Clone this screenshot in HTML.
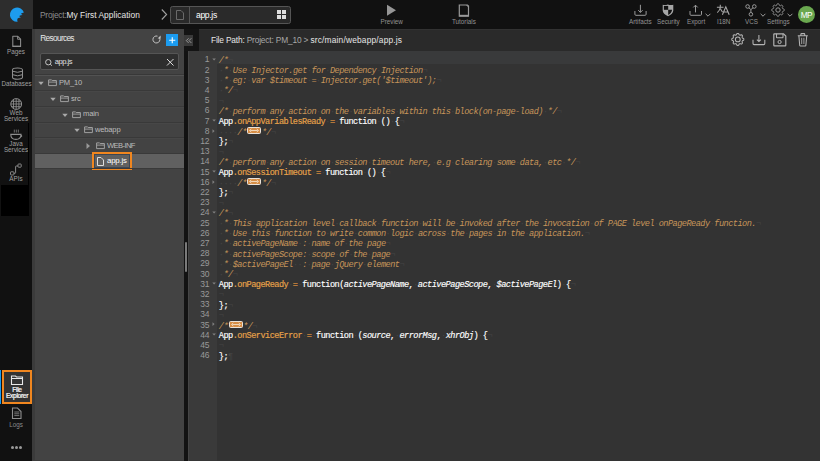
<!DOCTYPE html><html><head><meta charset="utf-8"><style>
*{margin:0;padding:0;box-sizing:border-box}
html,body{width:820px;height:461px;overflow:hidden;background:#111;font-family:"Liberation Sans",sans-serif}
.a{position:absolute}
.t{position:absolute;white-space:pre;line-height:1}
.lbl{position:absolute;font-size:6.3px;color:#939393;white-space:nowrap;line-height:1}
svg{position:absolute;overflow:visible}
.cl{position:absolute;left:0;white-space:pre;-webkit-text-stroke:0.15px currentColor;font-family:"Liberation Mono",monospace;font-size:8.6px;letter-spacing:-0.53px;height:10.2px;line-height:10.2px}
.ln{position:absolute;right:7px;font-family:"Liberation Sans",sans-serif;font-size:8.5px;color:#999;letter-spacing:-0.2px;line-height:10.2px;text-align:right}
.cm{color:#c7955a;font-style:italic;-webkit-text-stroke:0}
.id{color:#fff}
.pr{color:#e9a44a}
.op{color:#d08a3c}
.kw{color:#fff}
.pa{color:#fff;font-style:italic}
.ws{color:#444;font-style:normal;-webkit-text-stroke:0}
.fold{display:inline-block;width:14px;height:7px;border:1px solid #e9e2da;border-radius:1.5px;background:#d68d45;vertical-align:0.5px;margin:0 0.5px 0 0.5px;position:relative;-webkit-text-stroke:0}
.fold svg{left:0;top:0}
</style></head><body>
<div class="a" style="left:0;top:0;width:820px;height:29px;background:#111"></div>
<div class="a" style="left:0;top:0;width:33px;height:29px;background:#2d2d2d"></div>
<div class="a" style="left:0;top:29px;width:32px;height:432px;background:#111"></div>
<div class="a" style="left:32px;top:29px;width:152px;height:432px;background:#434343"></div>
<div class="a" style="left:32px;top:29px;width:3px;height:432px;background:#3b3b3b"></div>
<div class="a" style="left:184px;top:29px;width:4px;height:432px;background:#121212"></div>
<div class="a" style="left:184px;top:29px;width:15px;height:22px;background:#141414"></div>
<div class="a" style="left:199px;top:29px;width:621px;height:22px;background:#2a2a2a"></div>
<div class="a" style="left:199px;top:29px;width:621px;height:1px;background:#323232"></div>
<div class="a" style="left:188px;top:51px;width:29px;height:410px;background:#3a3a3a"></div>
<div class="a" style="left:188px;top:51px;width:1px;height:410px;background:#454545"></div>
<div class="a" style="left:217px;top:51px;width:603px;height:410px;background:#333"></div>
<svg style="left:0;top:0" width="33" height="29" viewBox="0 0 33 29"><path fill="#1d9cee" d="M23.9 12.6 A7.15 7.15 0 1 0 17.6 21.8 Q16.8 19.8 17.6 18.4 Q18.8 17.4 20.9 17.4 Q19.6 16.8 19.2 16.1 Q20.8 15 22.6 15 Q21.3 14.4 20.9 13.8 Q22.2 12.8 23.9 12.6 Z"/></svg>
<div class="t" style="left:40px;top:10.5px;font-size:8.4px;color:#8c8c8c"><span style="letter-spacing:-0.24px">Project:</span><span style="color:#e6e6e6;letter-spacing:0.04px">My First Application</span></div>
<svg style="left:160px;top:8px" width="10" height="13"><path d="M1.8 1.5 L6.6 6.5 L1.8 11.5" fill="none" stroke="#a0a0a0" stroke-width="1.1"/></svg>
<div class="a" style="left:170px;top:6px;width:121px;height:18px;background:#2a2a2a;border:1px solid #555;border-radius:2.5px"></div>
<div class="a" style="left:189px;top:7px;width:1px;height:16px;background:#555"></div>
<svg style="left:175px;top:9px" width="10" height="12"><path d="M1.5 1.5 H6 L8.5 4 V10.5 H1.5 Z" fill="none" stroke="#6a6a6a" stroke-width="1"/></svg>
<div class="t" style="left:196px;top:10.5px;font-size:8.6px;color:#fff;letter-spacing:-0.35px">app.js</div>
<div class="a" style="left:277px;top:10px;width:4px;height:4px;background:#ddd"></div>
<div class="a" style="left:282px;top:10px;width:4px;height:4px;background:#ddd"></div>
<div class="a" style="left:277px;top:15px;width:4px;height:4px;background:#ddd"></div>
<div class="a" style="left:282px;top:15px;width:4px;height:4px;background:#ddd"></div>
<svg style="left:386px;top:4px" width="12" height="14"><path d="M1 0.8 L10 6.2 L1 11.8 Z" fill="#969696"/></svg>
<div class="lbl" style="left:380.5px;top:18.9px">Preview</div>
<svg style="left:458px;top:4px" width="13" height="14"><path d="M1.3 1 H9.5 L10.5 2 V12.2 H1.3 Z" fill="none" stroke="#999" stroke-width="1.2"/><path d="M1.3 11.6 H10.5" stroke="#999" stroke-width="1.6"/><path d="M8.5 1 L10.5 3" stroke="#999" stroke-width="1"/></svg>
<div class="lbl" style="left:452px;top:18.9px">Tutorials</div>
<svg style="left:633px;top:4px" width="16" height="14"><path d="M7.4 0.8 V8.4 M5.2 6.2 L7.4 8.4 L9.6 6.2" fill="none" stroke="#9a9a9a" stroke-width="1"/><path d="M1.9 7 V10.3 Q1.9 11.3 2.9 11.3 H12.1 Q13.1 11.3 13.1 10.3 V7" fill="none" stroke="#9a9a9a" stroke-width="1"/></svg>
<div class="lbl" style="left:629px;top:18.9px">Artifacts</div>
<svg style="left:662px;top:4px" width="13" height="14"><path d="M0.7 0.8 Q3.2 1.5 5.8 0.6 Q8.6 1.5 11.3 0.8 V6.5 Q11 10.2 6 12.2 Q1 10.2 0.7 6.5 Z" fill="#a6a6a6"/><path d="M1.9 1.9 H6.2 V5.8 H1.9 Z" fill="#111"/><path d="M6.2 5.8 H10.1 Q9.7 9.2 6.2 10.9 Z" fill="#111"/></svg>
<div class="lbl" style="left:657px;top:18.9px">Security</div>
<svg style="left:688px;top:4px" width="16" height="14"><path d="M7.5 8.4 V1.2 M5.3 3.4 L7.5 1.2 L9.7 3.4" fill="none" stroke="#9a9a9a" stroke-width="1"/><path d="M2 7 V10.3 Q2 11.3 3 11.3 H12.5 Q13.5 11.3 13.5 10.3 V7" fill="none" stroke="#9a9a9a" stroke-width="1"/></svg>
<div class="lbl" style="left:687px;top:18.9px">Export</div>
<svg style="left:704.5px;top:13px" width="8" height="5"><path d="M0.6 0.8 L3 3.2 L5.4 0.8" fill="none" stroke="#9a9a9a" stroke-width="1"/></svg>
<svg style="left:716px;top:4px" width="15" height="13"><path d="M4.3 0.8 V3.2 M0.9 3.2 H7.5 M4.3 3.2 Q4 6.5 1.3 8.6 M4.5 4.8 Q5.6 7.2 6.6 8" fill="none" stroke="#a8a8a8" stroke-width="1.05"/><path d="M6.4 10.8 L9.8 2.9 L13.2 10.8 M7.6 8 H12" fill="none" stroke="#a8a8a8" stroke-width="1.1"/></svg>
<div class="lbl" style="left:717px;top:18.9px">I18N</div>
<svg style="left:744px;top:3px" width="14" height="14"><circle cx="3.6" cy="3.5" r="1.8" fill="none" stroke="#9a9a9a" stroke-width="1"/><circle cx="10.3" cy="3.5" r="1.8" fill="none" stroke="#9a9a9a" stroke-width="1"/><circle cx="6.9" cy="11.3" r="1.8" fill="none" stroke="#9a9a9a" stroke-width="1"/><path d="M4.9 4.8 L6.9 6.6 L9 4.8 M6.9 6.6 V9.5" fill="none" stroke="#9a9a9a" stroke-width="1"/></svg>
<div class="lbl" style="left:745px;top:18.9px">VCS</div>
<svg style="left:759.7px;top:13px" width="8" height="5"><path d="M0.6 0.8 L3 3.2 L5.4 0.8" fill="none" stroke="#9a9a9a" stroke-width="1"/></svg>
<svg style="left:771px;top:3px" width="15" height="15"><path d="M13.30 7.00 L13.29 7.25 L13.26 7.49 L13.17 7.73 L12.93 7.94 L12.44 8.08 L11.95 8.19 L11.71 8.33 L11.59 8.49 L11.51 8.66 L11.43 8.84 L11.36 9.01 L11.30 9.19 L11.27 9.39 L11.34 9.66 L11.61 10.08 L11.86 10.53 L11.88 10.85 L11.77 11.08 L11.62 11.27 L11.45 11.45 L11.27 11.62 L11.08 11.77 L10.85 11.88 L10.53 11.86 L10.08 11.61 L9.66 11.34 L9.39 11.27 L9.19 11.30 L9.01 11.36 L8.84 11.43 L8.66 11.51 L8.49 11.59 L8.33 11.71 L8.19 11.95 L8.08 12.44 L7.94 12.93 L7.73 13.17 L7.49 13.26 L7.25 13.29 L7.00 13.30 L6.75 13.29 L6.51 13.26 L6.27 13.17 L6.06 12.93 L5.92 12.44 L5.81 11.95 L5.67 11.71 L5.51 11.59 L5.34 11.51 L5.16 11.43 L4.99 11.36 L4.81 11.30 L4.61 11.27 L4.34 11.34 L3.92 11.61 L3.47 11.86 L3.15 11.88 L2.92 11.77 L2.73 11.62 L2.55 11.45 L2.38 11.27 L2.23 11.08 L2.12 10.85 L2.14 10.53 L2.39 10.08 L2.66 9.66 L2.73 9.39 L2.70 9.19 L2.64 9.01 L2.57 8.84 L2.49 8.66 L2.41 8.49 L2.29 8.33 L2.05 8.19 L1.56 8.08 L1.07 7.94 L0.83 7.73 L0.74 7.49 L0.71 7.25 L0.70 7.00 L0.71 6.75 L0.74 6.51 L0.83 6.27 L1.07 6.06 L1.56 5.92 L2.05 5.81 L2.29 5.67 L2.41 5.51 L2.49 5.34 L2.57 5.16 L2.64 4.99 L2.70 4.81 L2.73 4.61 L2.66 4.34 L2.39 3.92 L2.14 3.47 L2.12 3.15 L2.23 2.92 L2.38 2.73 L2.55 2.55 L2.73 2.38 L2.92 2.23 L3.15 2.12 L3.47 2.14 L3.92 2.39 L4.34 2.66 L4.61 2.73 L4.81 2.70 L4.99 2.64 L5.16 2.57 L5.34 2.49 L5.51 2.41 L5.67 2.29 L5.81 2.05 L5.92 1.56 L6.06 1.07 L6.27 0.83 L6.51 0.74 L6.75 0.71 L7.00 0.70 L7.25 0.71 L7.49 0.74 L7.73 0.83 L7.94 1.07 L8.08 1.56 L8.19 2.05 L8.33 2.29 L8.49 2.41 L8.66 2.49 L8.84 2.57 L9.01 2.64 L9.19 2.70 L9.39 2.73 L9.66 2.66 L10.08 2.39 L10.53 2.14 L10.85 2.12 L11.08 2.23 L11.27 2.38 L11.45 2.55 L11.62 2.73 L11.77 2.92 L11.88 3.15 L11.86 3.47 L11.61 3.92 L11.34 4.34 L11.27 4.61 L11.30 4.81 L11.36 4.99 L11.43 5.16 L11.51 5.34 L11.59 5.51 L11.71 5.67 L11.95 5.81 L12.44 5.92 L12.93 6.06 L13.17 6.27 L13.26 6.51 L13.29 6.75Z" fill="none" stroke="#9a9a9a" stroke-width="1" stroke-linejoin="round"/><circle cx="7" cy="7" r="2.2" fill="none" stroke="#9a9a9a" stroke-width="1"/></svg>
<div class="lbl" style="left:767px;top:18.9px">Settings</div>
<svg style="left:787.2px;top:13px" width="8" height="5"><path d="M0.6 0.8 L3 3.2 L5.4 0.8" fill="none" stroke="#9a9a9a" stroke-width="1"/></svg>
<div class="a" style="left:798px;top:6px;width:17px;height:17px;border-radius:50%;background:#6aa84f"></div>
<div class="t" style="left:797.8px;top:11.2px;width:17px;text-align:center;font-size:8.3px;color:#fff;letter-spacing:-0.7px">MP</div>
<svg style="left:11px;top:35px" width="12" height="13"><path d="M1.8 1.3 H6.8 L9.6 4.1 V11.5 H1.8 Z" fill="none" stroke="#8f8f8f" stroke-width="1.05" stroke-linejoin="round"/><path d="M6.6 1.3 V4.3 H9.6" fill="none" stroke="#8f8f8f" stroke-width="0.9"/><path d="M1.8 11.3 H9.6" stroke="#8f8f8f" stroke-width="1.4"/></svg>
<div class="lbl" style="left:0;width:32px;text-align:center;top:48.8px;color:#a0a0a0">Pages</div>
<svg style="left:11px;top:67px" width="13" height="14"><path d="M1.5 3 Q1.5 1 6.5 1 Q11.5 1 11.5 3 V10.3 Q11.5 12.2 6.5 12.2 Q1.5 12.2 1.5 10.3 Z" fill="none" stroke="#8f8f8f" stroke-width="1.05"/><path d="M1.5 4.2 Q6.5 6.4 11.5 4.2 M1.5 7.7 Q6.5 9.9 11.5 7.7" fill="none" stroke="#8f8f8f" stroke-width="1"/></svg>
<div class="lbl" style="left:0.5px;width:32px;text-align:center;top:80.6px;color:#a0a0a0;letter-spacing:0px">Databases</div>
<svg style="left:9.5px;top:97.5px" width="13" height="13"><defs><clipPath id="gc"><circle cx="6.2" cy="6" r="5.4"/></clipPath></defs><circle cx="6.2" cy="6" r="5.4" fill="none" stroke="#8f8f8f" stroke-width="1"/><g clip-path="url(#gc)"><path d="M0 3.3 H13 M0 6 H13 M0 8.7 H13 M3.5 0 V13 M6.2 0 V13 M8.9 0 V13" stroke="#8f8f8f" stroke-width="0.85"/></g></svg>
<div class="lbl" style="left:0;width:32px;text-align:center;top:110.2px;color:#a0a0a0;line-height:6px">Web<br>Services</div>
<svg style="left:9px;top:129px" width="15" height="12"><path d="M5.3 0.6 V3.6 M7.3 0.6 V3.6 M9.3 0.6 V3.6" stroke="#8f8f8f" stroke-width="0.75"/><path d="M1.8 5.4 H12 Q12 10.4 6.9 10.4 Q1.8 10.4 1.8 5.4 Z" fill="none" stroke="#8f8f8f" stroke-width="1.1"/><path d="M12 6.2 Q14.2 6.6 11.8 8.4" fill="none" stroke="#8f8f8f" stroke-width="0.9"/></svg>
<div class="lbl" style="left:0;width:32px;text-align:center;top:141.2px;color:#a0a0a0;line-height:6px">Java<br>Services</div>
<svg style="left:9px;top:163px" width="14" height="13"><rect x="9" y="1" width="3.2" height="3.2" rx="0.6" fill="none" stroke="#8f8f8f" stroke-width="0.95"/><rect x="1.5" y="8.8" width="3.4" height="3.2" rx="0.6" fill="none" stroke="#8f8f8f" stroke-width="0.95"/><path d="M9 3 H7.2 Q6.6 3 6.6 3.6 V9.6 Q6.6 10.3 6 10.3 H4.9" fill="none" stroke="#8f8f8f" stroke-width="0.95"/></svg>
<div class="lbl" style="left:0;width:32px;text-align:center;top:176.2px;color:#a0a0a0">APIs</div>
<div class="a" style="left:28px;top:123px;width:1px;height:62px;background:#000"></div>
<div class="a" style="left:1px;top:185px;width:28px;height:31px;background:#000"></div>
<div class="a" style="left:0;top:370px;width:1px;height:34px;background:#1b9cf0"></div>
<div class="a" style="left:2px;top:370px;width:29.5px;height:33.5px;border:2px solid #f0861f;background:#333"></div>
<svg style="left:10px;top:374px" width="14" height="12"><path d="M1.5 2 H5.5 L6.5 3 H12.5 V10.5 H1.5 Z M1.5 4.5 H12.5" fill="none" stroke="#e8e8e8" stroke-width="1.1"/></svg>
<div class="lbl" style="left:1px;width:32px;text-align:center;top:387px;color:#fff;font-size:6.6px;line-height:6.3px;letter-spacing:-0.3px;-webkit-text-stroke:0.2px #fff">File<br>Explorer</div>
<svg style="left:11px;top:407px" width="12" height="13"><path d="M1.5 1 H6.5 L10 4.5 V11.5 H1.5 Z" fill="none" stroke="#8f8f8f" stroke-width="1.1"/><path d="M3.3 5 H8.3 M3.3 6.8 H8.3 M3.3 8.6 H8.3" fill="none" stroke="#8f8f8f" stroke-width="0.8"/></svg>
<div class="lbl" style="left:0;width:32px;text-align:center;top:421.7px;color:#8a8a8a">Logs</div>
<div class="a" style="left:10.5px;top:446.3px;width:3px;height:3px;border-radius:50%;background:#9a9a9a"></div>
<div class="a" style="left:14.8px;top:446.3px;width:3px;height:3px;border-radius:50%;background:#9a9a9a"></div>
<div class="a" style="left:19.1px;top:446.3px;width:3px;height:3px;border-radius:50%;background:#9a9a9a"></div>
<div class="t" style="left:40.3px;top:34.3px;font-size:8.3px;color:#e8e8e8;letter-spacing:-0.68px">Resources</div>
<svg style="left:152px;top:35px" width="10" height="10"><path d="M7.6 3.0 A3.5 3.5 0 1 1 5.5 1.15" fill="none" stroke="#c8c8c8" stroke-width="0.95" transform="rotate(0)"/><path d="M8.6 0.6 V3.6 H5.6 Z" fill="#c8c8c8"/></svg>
<div class="a" style="left:165.5px;top:33.5px;width:12.5px;height:12.5px;background:#1c9cf0"></div>
<svg style="left:165.5px;top:33.5px" width="13" height="13"><path d="M6.25 3.2 V9.3 M3.2 6.25 H9.3" stroke="#fff" stroke-width="1.1"/></svg>
<div class="a" style="left:40px;top:53px;width:139px;height:16.6px;background:#2e2e2e;border:1px solid #555;border-radius:2px"></div>
<svg style="left:44px;top:58px" width="10" height="10"><circle cx="4.3" cy="4.2" r="2.7" fill="none" stroke="#c8c8c8" stroke-width="0.95"/><path d="M6.2 6.1 L7.9 7.7" stroke="#c8c8c8" stroke-width="1"/></svg>
<div class="t" style="left:54.8px;top:57.5px;font-size:7.6px;color:#e0e0e0;letter-spacing:-0.5px">app.js</div>
<svg style="left:166px;top:58px" width="9" height="9"><path d="M1 1 L7.5 7.5 M7.5 1 L1 7.5" stroke="#ddd" stroke-width="1"/></svg>
<div class="a" style="left:35px;top:74.4px;width:149px;height:1px;background:#383838"></div>
<div class="a" style="left:35px;top:75.4px;width:149px;height:1px;background:#525252"></div>
<svg style="left:38px;top:81.48px" width="7" height="5"><path d="M0.3 0.8 H5.7 L3 4 Z" fill="#aaa"/></svg>
<svg style="left:48px;top:79.48px" width="10" height="8"><path d="M0.6 0.9 H3.6 L4.2 1.5 H8.4 V6.6 H0.6 Z" fill="none" stroke="#a4a4a4" stroke-width="0.95"/><path d="M0.6 3.1 H8.4" stroke="#a4a4a4" stroke-width="0.9"/></svg>
<div class="t" style="left:59px;top:79.38px;font-size:7.6px;color:#bcbcbc;letter-spacing:-0.2px">PM<span style="position:relative;top:-0.8px">_</span>10</div>
<div class="a" style="left:35px;top:90.45px;width:149px;height:1px;background:#393939"></div>
<div class="a" style="left:35px;top:91.45px;width:149px;height:1px;background:#474747"></div>
<svg style="left:50px;top:97.03px" width="7" height="5"><path d="M0.3 0.8 H5.7 L3 4 Z" fill="#aaa"/></svg>
<svg style="left:60px;top:95.03px" width="10" height="8"><path d="M0.6 0.9 H3.6 L4.2 1.5 H8.4 V6.6 H0.6 Z" fill="none" stroke="#a4a4a4" stroke-width="0.95"/><path d="M0.6 3.1 H8.4" stroke="#a4a4a4" stroke-width="0.9"/></svg>
<div class="t" style="left:71px;top:94.93px;font-size:7.6px;color:#bcbcbc;letter-spacing:-0.2px">src</div>
<div class="a" style="left:35px;top:106.00px;width:149px;height:1px;background:#393939"></div>
<div class="a" style="left:35px;top:107.00px;width:149px;height:1px;background:#474747"></div>
<svg style="left:62px;top:112.58px" width="7" height="5"><path d="M0.3 0.8 H5.7 L3 4 Z" fill="#aaa"/></svg>
<svg style="left:72px;top:110.58px" width="10" height="8"><path d="M0.6 0.9 H3.6 L4.2 1.5 H8.4 V6.6 H0.6 Z" fill="none" stroke="#a4a4a4" stroke-width="0.95"/><path d="M0.6 3.1 H8.4" stroke="#a4a4a4" stroke-width="0.9"/></svg>
<div class="t" style="left:83px;top:110.48px;font-size:7.6px;color:#bcbcbc;letter-spacing:-0.2px">main</div>
<div class="a" style="left:35px;top:121.55px;width:149px;height:1px;background:#393939"></div>
<div class="a" style="left:35px;top:122.55px;width:149px;height:1px;background:#474747"></div>
<svg style="left:74px;top:128.13px" width="7" height="5"><path d="M0.3 0.8 H5.7 L3 4 Z" fill="#aaa"/></svg>
<svg style="left:84px;top:126.13px" width="10" height="8"><path d="M0.6 0.9 H3.6 L4.2 1.5 H8.4 V6.6 H0.6 Z" fill="none" stroke="#a4a4a4" stroke-width="0.95"/><path d="M0.6 3.1 H8.4" stroke="#a4a4a4" stroke-width="0.9"/></svg>
<div class="t" style="left:95px;top:126.03px;font-size:7.6px;color:#bcbcbc;letter-spacing:-0.2px">webapp</div>
<div class="a" style="left:35px;top:137.10px;width:149px;height:1px;background:#393939"></div>
<div class="a" style="left:35px;top:138.10px;width:149px;height:1px;background:#474747"></div>
<svg style="left:86px;top:142.68px" width="6" height="7"><path d="M0.5 0 V6 L4 3 Z" fill="#999"/></svg>
<svg style="left:96px;top:141.68px" width="10" height="8"><path d="M0.6 0.9 H3.6 L4.2 1.5 H8.4 V6.6 H0.6 Z" fill="none" stroke="#a4a4a4" stroke-width="0.95"/><path d="M0.6 3.1 H8.4" stroke="#a4a4a4" stroke-width="0.9"/></svg>
<div class="t" style="left:107px;top:141.58px;font-size:7.6px;color:#bcbcbc;letter-spacing:-0.2px"><span style="letter-spacing:-0.6px">WEB-INF</span></div>
<div class="a" style="left:35px;top:152.65px;width:149px;height:1px;background:#393939"></div>
<div class="a" style="left:35px;top:153.65px;width:149px;height:1px;background:#474747"></div>
<div class="a" style="left:35px;top:153.65px;width:149px;height:14.55px;background:#606060"></div>
<div class="a" style="left:92px;top:152.35px;width:39.5px;height:17.6px;border:2px solid #f0861f"></div>
<div class="a" style="left:94px;top:154.35px;width:35.5px;height:13.6px;border:1px solid #3c4654"></div>
<svg style="left:97px;top:156.73px" width="8" height="9"><path d="M0.5 0.5 H4 L6.5 3 V8.5 H0.5 Z" fill="none" stroke="#ddd" stroke-width="1"/></svg>
<div class="t" style="left:107px;top:157.13px;font-size:7.8px;color:#fff;letter-spacing:-0.2px">app.js</div>
<div class="a" style="left:35px;top:168.20px;width:149px;height:1px;background:#393939"></div>
<div class="a" style="left:184px;top:35px;width:9px;height:11px;background:#3a3a3a"></div>
<svg style="left:185px;top:37px" width="8" height="8"><path d="M3.6 1.3 L1.3 3.6 L3.6 5.9 M6.3 1.3 L4 3.6 L6.3 5.9" fill="none" stroke="#aaa" stroke-width="0.85"/></svg>
<div class="a" style="left:185px;top:242px;width:2.2px;height:30.3px;background:#7a7a7a;border-radius:1.1px"></div>
<div class="t" style="left:211px;top:36px;font-size:8.35px;color:#e6e6e6"><span style="letter-spacing:-0.17px">File Path: </span><span style="color:#a8a8a8;letter-spacing:-0.17px">Project: PM_10 &gt; </span><span style="letter-spacing:0.19px">src/main/webapp/app.js</span></div>
<svg style="left:731px;top:33px" width="14" height="14"><path d="M12.80 6.40 L12.79 6.64 L12.76 6.87 L12.69 7.10 L12.49 7.30 L12.10 7.45 L11.70 7.58 L11.49 7.72 L11.38 7.89 L11.31 8.06 L11.23 8.24 L11.16 8.41 L11.09 8.59 L11.05 8.78 L11.09 9.03 L11.29 9.40 L11.46 9.79 L11.46 10.07 L11.35 10.28 L11.20 10.47 L11.04 10.64 L10.87 10.80 L10.68 10.95 L10.47 11.06 L10.19 11.06 L9.80 10.89 L9.43 10.69 L9.18 10.65 L8.99 10.69 L8.81 10.76 L8.64 10.83 L8.46 10.91 L8.29 10.98 L8.12 11.09 L7.98 11.30 L7.85 11.70 L7.70 12.09 L7.50 12.29 L7.27 12.36 L7.04 12.39 L6.80 12.40 L6.56 12.39 L6.33 12.36 L6.10 12.29 L5.90 12.09 L5.75 11.70 L5.62 11.30 L5.48 11.09 L5.31 10.98 L5.14 10.91 L4.96 10.83 L4.79 10.76 L4.61 10.69 L4.42 10.65 L4.17 10.69 L3.80 10.89 L3.41 11.06 L3.13 11.06 L2.92 10.95 L2.73 10.80 L2.56 10.64 L2.40 10.47 L2.25 10.28 L2.14 10.07 L2.14 9.79 L2.31 9.40 L2.51 9.03 L2.55 8.78 L2.51 8.59 L2.44 8.41 L2.37 8.24 L2.29 8.06 L2.22 7.89 L2.11 7.72 L1.90 7.58 L1.50 7.45 L1.11 7.30 L0.91 7.10 L0.84 6.87 L0.81 6.64 L0.80 6.40 L0.81 6.16 L0.84 5.93 L0.91 5.70 L1.11 5.50 L1.50 5.35 L1.90 5.22 L2.11 5.08 L2.22 4.91 L2.29 4.74 L2.37 4.56 L2.44 4.39 L2.51 4.21 L2.55 4.02 L2.51 3.77 L2.31 3.40 L2.14 3.01 L2.14 2.73 L2.25 2.52 L2.40 2.33 L2.56 2.16 L2.73 2.00 L2.92 1.85 L3.13 1.74 L3.41 1.74 L3.80 1.91 L4.17 2.11 L4.42 2.15 L4.61 2.11 L4.79 2.04 L4.96 1.97 L5.14 1.89 L5.31 1.82 L5.48 1.71 L5.62 1.50 L5.75 1.10 L5.90 0.71 L6.10 0.51 L6.33 0.44 L6.56 0.41 L6.80 0.40 L7.04 0.41 L7.27 0.44 L7.50 0.51 L7.70 0.71 L7.85 1.10 L7.98 1.50 L8.12 1.71 L8.29 1.82 L8.46 1.89 L8.64 1.97 L8.81 2.04 L8.99 2.11 L9.18 2.15 L9.43 2.11 L9.80 1.91 L10.19 1.74 L10.47 1.74 L10.68 1.85 L10.87 2.00 L11.04 2.16 L11.20 2.33 L11.35 2.52 L11.46 2.73 L11.46 3.01 L11.29 3.40 L11.09 3.77 L11.05 4.02 L11.09 4.21 L11.16 4.39 L11.23 4.56 L11.31 4.74 L11.38 4.91 L11.49 5.08 L11.70 5.22 L12.10 5.35 L12.49 5.50 L12.69 5.70 L12.76 5.93 L12.79 6.16Z" fill="none" stroke="#b4b4b4" stroke-width="1.05" stroke-linejoin="round"/><circle cx="6.8" cy="6.4" r="2.4" fill="none" stroke="#b4b4b4" stroke-width="1.05"/></svg>
<svg style="left:752px;top:34px" width="15" height="13"><path d="M6.9 1 V7.6 M4.9 5.6 L6.9 7.6 L8.9 5.6" fill="none" stroke="#b4b4b4" stroke-width="1.05"/><path d="M1 5.8 V9.6 Q1 10.6 2 10.6 H11.8 Q12.8 10.6 12.8 9.6 V5.8" fill="none" stroke="#b4b4b4" stroke-width="1.05"/></svg>
<svg style="left:773px;top:33px" width="14" height="14"><path d="M1.3 0.8 H10.5 L12.8 3.1 V12.2 Q12.8 12.8 12.2 12.8 H1.3 Q0.8 12.8 0.8 12.2 V1.3 Q0.8 0.8 1.3 0.8 Z" fill="none" stroke="#b4b4b4" stroke-width="1.15"/><path d="M3.5 0.8 V4.3 Q3.5 4.8 4 4.8 H9.5 Q10 4.8 10 4.3 V0.8" fill="none" stroke="#b4b4b4" stroke-width="1.05"/><circle cx="6.6" cy="9" r="1.6" fill="none" stroke="#b4b4b4" stroke-width="1"/></svg>
<svg style="left:797px;top:32px" width="12" height="15"><path d="M0.8 3.8 H10.8 M3.9 3.8 V2.2 Q3.9 1.6 4.5 1.6 H7.1 Q7.7 1.6 7.7 2.2 V3.8 M1.9 4 L2.7 13.3 Q2.8 13.9 3.4 13.9 H8.2 Q8.8 13.9 8.9 13.3 L9.7 4" fill="none" stroke="#b4b4b4" stroke-width="1.05"/><path d="M4.7 5.8 V12 M6.9 5.8 V12" stroke="#b4b4b4" stroke-width="0.85"/></svg>
<div class="a" style="left:217px;top:51px;width:603px;height:13px;background:#393a3b"></div>
<div class="a" style="left:188px;top:0;width:632px;height:461px">
<div class="ln" style="left:0;width:21.4px;top:54.40px">1</div>
<svg style="left:23.6px;top:57.70px" width="5" height="4"><path d="M0.3 0.5 H3.9 L2.1 2.6 Z" fill="#808080"/></svg>
<div class="cl" style="left:30.8px;top:55.80px"><span class="cm">/*</span><span class="ws">¬</span></div>
<div class="ln" style="left:0;width:21.4px;top:64.60px">2</div>
<div class="cl" style="left:30.8px;top:66.00px"><span class="cm"><span class="ws">·</span>*<span class="ws">·</span>Use<span class="ws">·</span>Injector.get<span class="ws">·</span>for<span class="ws">·</span>Dependency<span class="ws">·</span>Injection</span><span class="ws">¬</span></div>
<div class="ln" style="left:0;width:21.4px;top:74.80px">3</div>
<div class="cl" style="left:30.8px;top:76.20px"><span class="cm"><span class="ws">·</span>*<span class="ws">·</span>eg:<span class="ws">·</span>var<span class="ws">·</span>$timeout<span class="ws">·</span>=<span class="ws">·</span>Injector.get(&#x27;$timeout&#x27;);</span><span class="ws">¬</span></div>
<div class="ln" style="left:0;width:21.4px;top:85.00px">4</div>
<div class="cl" style="left:30.8px;top:86.40px"><span class="cm"><span class="ws">·</span>*/</span><span class="ws">¬</span></div>
<div class="ln" style="left:0;width:21.4px;top:95.20px">5</div>
<div class="cl" style="left:30.8px;top:96.60px"><span class="ws">¬</span></div>
<div class="ln" style="left:0;width:21.4px;top:105.40px">6</div>
<div class="cl" style="left:30.8px;top:106.80px"><span class="cm">/*<span class="ws">·</span>perform<span class="ws">·</span>any<span class="ws">·</span>action<span class="ws">·</span>on<span class="ws">·</span>the<span class="ws">·</span>variables<span class="ws">·</span>within<span class="ws">·</span>this<span class="ws">·</span>block(on-page-load)<span class="ws">·</span>*/</span><span class="ws">¬</span></div>
<div class="ln" style="left:0;width:21.4px;top:115.60px">7</div>
<svg style="left:23.6px;top:118.90px" width="5" height="4"><path d="M0.3 0.5 H3.9 L2.1 2.6 Z" fill="#808080"/></svg>
<div class="cl" style="left:30.8px;top:117.00px"><span class="id">App</span><span class="pr">.onAppVariablesReady</span><span class="ws">·</span><span class="op">=</span><span class="ws">·</span><span class="kw">function</span><span class="ws">·</span><span class="kw">()</span><span class="ws">·</span><span class="kw">{</span><span class="ws">¬</span></div>
<div class="ln" style="left:0;width:21.4px;top:125.80px">8</div>
<svg style="left:24.3px;top:128.60px" width="4" height="5"><path d="M0.5 0.3 V3.9 L2.6 2.1 Z" fill="#808080"/></svg>
<div class="cl" style="left:30.8px;top:127.20px"><span class="ws">·</span><span class="ws">·</span><span class="ws">·</span><span class="ws">·</span><span class="cm">/*</span><span class="fold"><svg width="12" height="5"><path d="M2.3 2.5 H9.7" stroke="#f0d6b8" stroke-width="1"/><path d="M3.3 0.9 L1.5 2.5 L3.3 4.1 M8.7 0.9 L10.5 2.5 L8.7 4.1" fill="none" stroke="#f3dcc4" stroke-width="0.9"/></svg></span><span class="cm">*/</span><span class="ws">¬</span></div>
<div class="ln" style="left:0;width:21.4px;top:136.00px">12</div>
<div class="cl" style="left:30.8px;top:137.40px"><span class="kw">};</span><span class="ws">¬</span></div>
<div class="ln" style="left:0;width:21.4px;top:146.20px">13</div>
<div class="cl" style="left:30.8px;top:147.60px"><span class="ws">¬</span></div>
<div class="ln" style="left:0;width:21.4px;top:156.40px">14</div>
<div class="cl" style="left:30.8px;top:157.80px"><span class="cm">/*<span class="ws">·</span>perform<span class="ws">·</span>any<span class="ws">·</span>action<span class="ws">·</span>on<span class="ws">·</span>session<span class="ws">·</span>timeout<span class="ws">·</span>here,<span class="ws">·</span>e.g<span class="ws">·</span>clearing<span class="ws">·</span>some<span class="ws">·</span>data,<span class="ws">·</span>etc<span class="ws">·</span>*/</span><span class="ws">¬</span></div>
<div class="ln" style="left:0;width:21.4px;top:166.60px">15</div>
<svg style="left:23.6px;top:169.90px" width="5" height="4"><path d="M0.3 0.5 H3.9 L2.1 2.6 Z" fill="#808080"/></svg>
<div class="cl" style="left:30.8px;top:168.00px"><span class="id">App</span><span class="pr">.onSessionTimeout</span><span class="ws">·</span><span class="op">=</span><span class="ws">·</span><span class="kw">function</span><span class="ws">·</span><span class="kw">()</span><span class="ws">·</span><span class="kw">{</span><span class="ws">¬</span></div>
<div class="ln" style="left:0;width:21.4px;top:176.80px">16</div>
<svg style="left:24.3px;top:179.60px" width="4" height="5"><path d="M0.5 0.3 V3.9 L2.6 2.1 Z" fill="#808080"/></svg>
<div class="cl" style="left:30.8px;top:178.20px"><span class="ws">·</span><span class="ws">·</span><span class="ws">·</span><span class="ws">·</span><span class="cm">/*</span><span class="fold"><svg width="12" height="5"><path d="M2.3 2.5 H9.7" stroke="#f0d6b8" stroke-width="1"/><path d="M3.3 0.9 L1.5 2.5 L3.3 4.1 M8.7 0.9 L10.5 2.5 L8.7 4.1" fill="none" stroke="#f3dcc4" stroke-width="0.9"/></svg></span><span class="cm">*/</span><span class="ws">¬</span></div>
<div class="ln" style="left:0;width:21.4px;top:187.00px">22</div>
<div class="cl" style="left:30.8px;top:188.40px"><span class="kw">};</span><span class="ws">¬</span></div>
<div class="ln" style="left:0;width:21.4px;top:197.20px">23</div>
<div class="cl" style="left:30.8px;top:198.60px"><span class="ws">¬</span></div>
<div class="ln" style="left:0;width:21.4px;top:207.40px">24</div>
<svg style="left:23.6px;top:210.70px" width="5" height="4"><path d="M0.3 0.5 H3.9 L2.1 2.6 Z" fill="#808080"/></svg>
<div class="cl" style="left:30.8px;top:208.80px"><span class="cm">/*</span><span class="ws">¬</span></div>
<div class="ln" style="left:0;width:21.4px;top:217.60px">25</div>
<div class="cl" style="left:30.8px;top:219.00px"><span class="cm"><span class="ws">·</span>*<span class="ws">·</span>This<span class="ws">·</span>application<span class="ws">·</span>level<span class="ws">·</span>callback<span class="ws">·</span>function<span class="ws">·</span>will<span class="ws">·</span>be<span class="ws">·</span>invoked<span class="ws">·</span>after<span class="ws">·</span>the<span class="ws">·</span>invocation<span class="ws">·</span>of<span class="ws">·</span>PAGE<span class="ws">·</span>level<span class="ws">·</span>onPageReady<span class="ws">·</span>function.</span><span class="ws">¬</span></div>
<div class="ln" style="left:0;width:21.4px;top:227.80px">26</div>
<div class="cl" style="left:30.8px;top:229.20px"><span class="cm"><span class="ws">·</span>*<span class="ws">·</span>Use<span class="ws">·</span>this<span class="ws">·</span>function<span class="ws">·</span>to<span class="ws">·</span>write<span class="ws">·</span>common<span class="ws">·</span>logic<span class="ws">·</span>across<span class="ws">·</span>the<span class="ws">·</span>pages<span class="ws">·</span>in<span class="ws">·</span>the<span class="ws">·</span>application.</span><span class="ws">¬</span></div>
<div class="ln" style="left:0;width:21.4px;top:238.00px">27</div>
<div class="cl" style="left:30.8px;top:239.40px"><span class="cm"><span class="ws">·</span>*<span class="ws">·</span>activePageName<span class="ws">·</span>:<span class="ws">·</span>name<span class="ws">·</span>of<span class="ws">·</span>the<span class="ws">·</span>page</span><span class="ws">¬</span></div>
<div class="ln" style="left:0;width:21.4px;top:248.20px">28</div>
<div class="cl" style="left:30.8px;top:249.60px"><span class="cm"><span class="ws">·</span>*<span class="ws">·</span>activePageScope:<span class="ws">·</span>scope<span class="ws">·</span>of<span class="ws">·</span>the<span class="ws">·</span>page</span><span class="ws">¬</span></div>
<div class="ln" style="left:0;width:21.4px;top:258.40px">29</div>
<div class="cl" style="left:30.8px;top:259.80px"><span class="cm"><span class="ws">·</span>*<span class="ws">·</span>$activePageEl<span class="ws">·</span><span class="ws">·</span>:<span class="ws">·</span>page<span class="ws">·</span>jQuery<span class="ws">·</span>element</span><span class="ws">¬</span></div>
<div class="ln" style="left:0;width:21.4px;top:268.60px">30</div>
<div class="cl" style="left:30.8px;top:270.00px"><span class="cm"><span class="ws">·</span>*/</span><span class="ws">¬</span></div>
<div class="ln" style="left:0;width:21.4px;top:278.80px">31</div>
<svg style="left:23.6px;top:282.10px" width="5" height="4"><path d="M0.3 0.5 H3.9 L2.1 2.6 Z" fill="#808080"/></svg>
<div class="cl" style="left:30.8px;top:280.20px"><span class="id">App</span><span class="pr">.onPageReady</span><span class="ws">·</span><span class="op">=</span><span class="ws">·</span><span class="kw">function(</span><span class="pa">activePageName</span><span class="kw">,</span><span class="ws">·</span><span class="pa">activePageScope</span><span class="kw">,</span><span class="ws">·</span><span class="pa">$activePageEl</span><span class="kw">)</span><span class="ws">·</span><span class="kw">{</span><span class="ws">¬</span></div>
<div class="ln" style="left:0;width:21.4px;top:289.00px">32</div>
<div class="cl" style="left:30.8px;top:290.40px"><span class="ws">¬</span></div>
<div class="ln" style="left:0;width:21.4px;top:299.20px">33</div>
<div class="cl" style="left:30.8px;top:300.60px"><span class="kw">};</span><span class="ws">¬</span></div>
<div class="ln" style="left:0;width:21.4px;top:309.40px">34</div>
<div class="cl" style="left:30.8px;top:310.80px"><span class="ws">¬</span></div>
<div class="ln" style="left:0;width:21.4px;top:319.60px">35</div>
<svg style="left:24.3px;top:322.40px" width="4" height="5"><path d="M0.5 0.3 V3.9 L2.6 2.1 Z" fill="#808080"/></svg>
<div class="cl" style="left:30.8px;top:321.00px"><span class="cm">/*</span><span class="fold"><svg width="12" height="5"><path d="M2.3 2.5 H9.7" stroke="#f0d6b8" stroke-width="1"/><path d="M3.3 0.9 L1.5 2.5 L3.3 4.1 M8.7 0.9 L10.5 2.5 L8.7 4.1" fill="none" stroke="#f3dcc4" stroke-width="0.9"/></svg></span><span class="cm">*/</span><span class="ws">¬</span></div>
<div class="ln" style="left:0;width:21.4px;top:329.80px">44</div>
<svg style="left:23.6px;top:333.10px" width="5" height="4"><path d="M0.3 0.5 H3.9 L2.1 2.6 Z" fill="#808080"/></svg>
<div class="cl" style="left:30.8px;top:331.20px"><span class="id">App</span><span class="pr">.onServiceError</span><span class="ws">·</span><span class="op">=</span><span class="ws">·</span><span class="kw">function</span><span class="ws">·</span><span class="kw">(</span><span class="pa">source</span><span class="kw">,</span><span class="ws">·</span><span class="pa">errorMsg</span><span class="kw">,</span><span class="ws">·</span><span class="pa">xhrObj</span><span class="kw">)</span><span class="ws">·</span><span class="kw">{</span><span class="ws">¬</span></div>
<div class="ln" style="left:0;width:21.4px;top:340.00px">45</div>
<div class="cl" style="left:30.8px;top:341.40px"><span class="ws">¬</span></div>
<div class="ln" style="left:0;width:21.4px;top:350.20px">46</div>
<div class="cl" style="left:30.8px;top:351.60px"><span class="kw">};</span><span class="ws">¶</span></div>
</div>
<div class="a" style="left:35px;top:460px;width:149px;height:1px;background:#3c3c3c"></div>
<div class="a" style="left:189px;top:460px;width:28px;height:1px;background:#363636"></div>
</body></html>
